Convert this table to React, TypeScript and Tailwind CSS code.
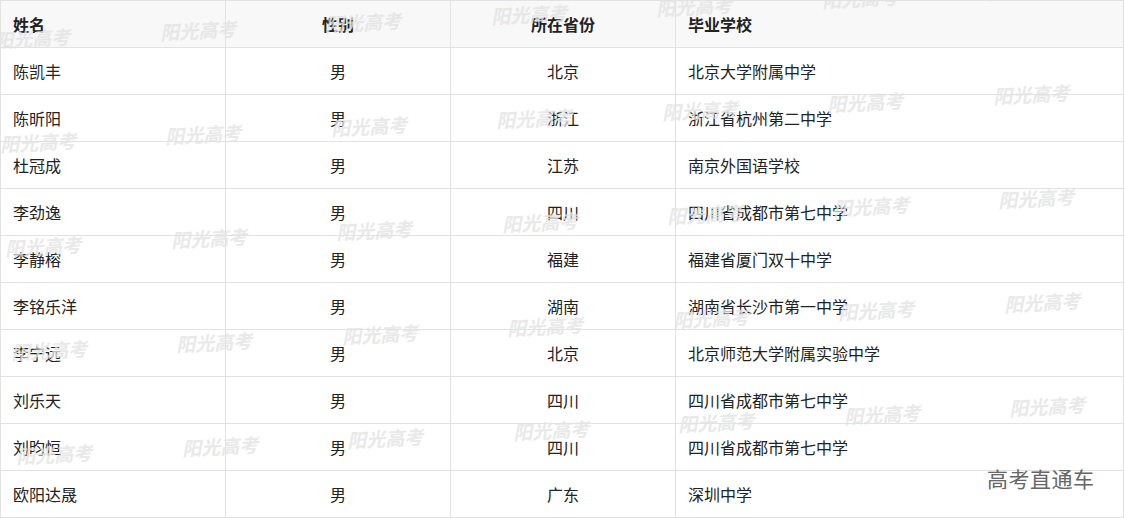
const rows = [
  ["陈凯丰", "男", "北京", "北京大学附属中学"],
  ["陈昕阳", "男", "浙江", "浙江省杭州第二中学"],
  ["杜冠成", "男", "江苏", "南京外国语学校"],
  ["李劲逸", "男", "四川", "四川省成都市第七中学"],
  ["李静榕", "男", "福建", "福建省厦门双十中学"],
  ["李铭乐洋", "男", "湖南", "湖南省长沙市第一中学"],
  ["李宁远", "男", "北京", "北京师范大学附属实验中学"],
  ["刘乐天", "男", "四川", "四川省成都市第七中学"],
  ["刘昀恒", "男", "四川", "四川省成都市第七中学"],
  ["欧阳达晟", "男", "广东", "深圳中学"],
];

// watermark grid: each row drifts right/down, each column steps up a bit
const marks: { x: number; y: number }[] = [];
for (let r = 0; r < 5; r++) {
  for (let c = 0; c < 7; c++) {
    marks.push({ x: -6 + 5.5 * r + 165.5 * c, y: 28 - 8 * c + 104 * r });
  }
}

const font = { fontFamily: '"Noto Sans CJK SC", "Noto Sans", sans-serif' };

export default function App() {
  return (
    <div className="relative w-[1125px] h-[518px] overflow-hidden bg-white" style={font}>
      <div className="grid w-[1124px] grid-cols-[225px_225px_225px_448px] border-l border-t border-[#e2e2e2] text-[16px] text-[#222]">
        <div className="h-[47px] flex items-center pl-3 border-r border-b border-[#e2e2e2] bg-[#f8f8f8] font-bold">姓名</div>
        <div className="h-[47px] flex items-center justify-center border-r border-b border-[#e2e2e2] bg-[#f8f8f8] font-bold">性别</div>
        <div className="h-[47px] flex items-center justify-center border-r border-b border-[#e2e2e2] bg-[#f8f8f8] font-bold">所在省份</div>
        <div className="h-[47px] flex items-center pl-3 border-r border-b border-[#e2e2e2] bg-[#f8f8f8] font-bold">毕业学校</div>
        {rows.map((r, i) => (
          <div key={i} className="contents">
            <div className="h-[47px] flex items-center pl-3 border-r border-b border-[#e2e2e2]">{r[0]}</div>
            <div className="h-[47px] flex items-center justify-center border-r border-b border-[#e2e2e2]">{r[1]}</div>
            <div className="h-[47px] flex items-center justify-center border-r border-b border-[#e2e2e2]">{r[2]}</div>
            <div className="h-[47px] flex items-center pl-3 border-r border-b border-[#e2e2e2]">{r[3]}</div>
          </div>
        ))}
      </div>

      {/* watermarks */}
      <div className="pointer-events-none absolute inset-0">
        {marks.map((m, i) => (
          <span
            key={i}
            className="absolute whitespace-nowrap text-[19px] leading-[20px] font-bold italic text-[#e4e4e4] opacity-80 -rotate-3"
            style={{ left: m.x, top: m.y }}
          >
            阳光高考
          </span>
        ))}
      </div>

      <span className="pointer-events-none absolute left-[987px] top-[464px] text-[21px] leading-[28px] text-[#666] tracking-[0.5px]">
        高考直通车
      </span>
    </div>
  );
}
